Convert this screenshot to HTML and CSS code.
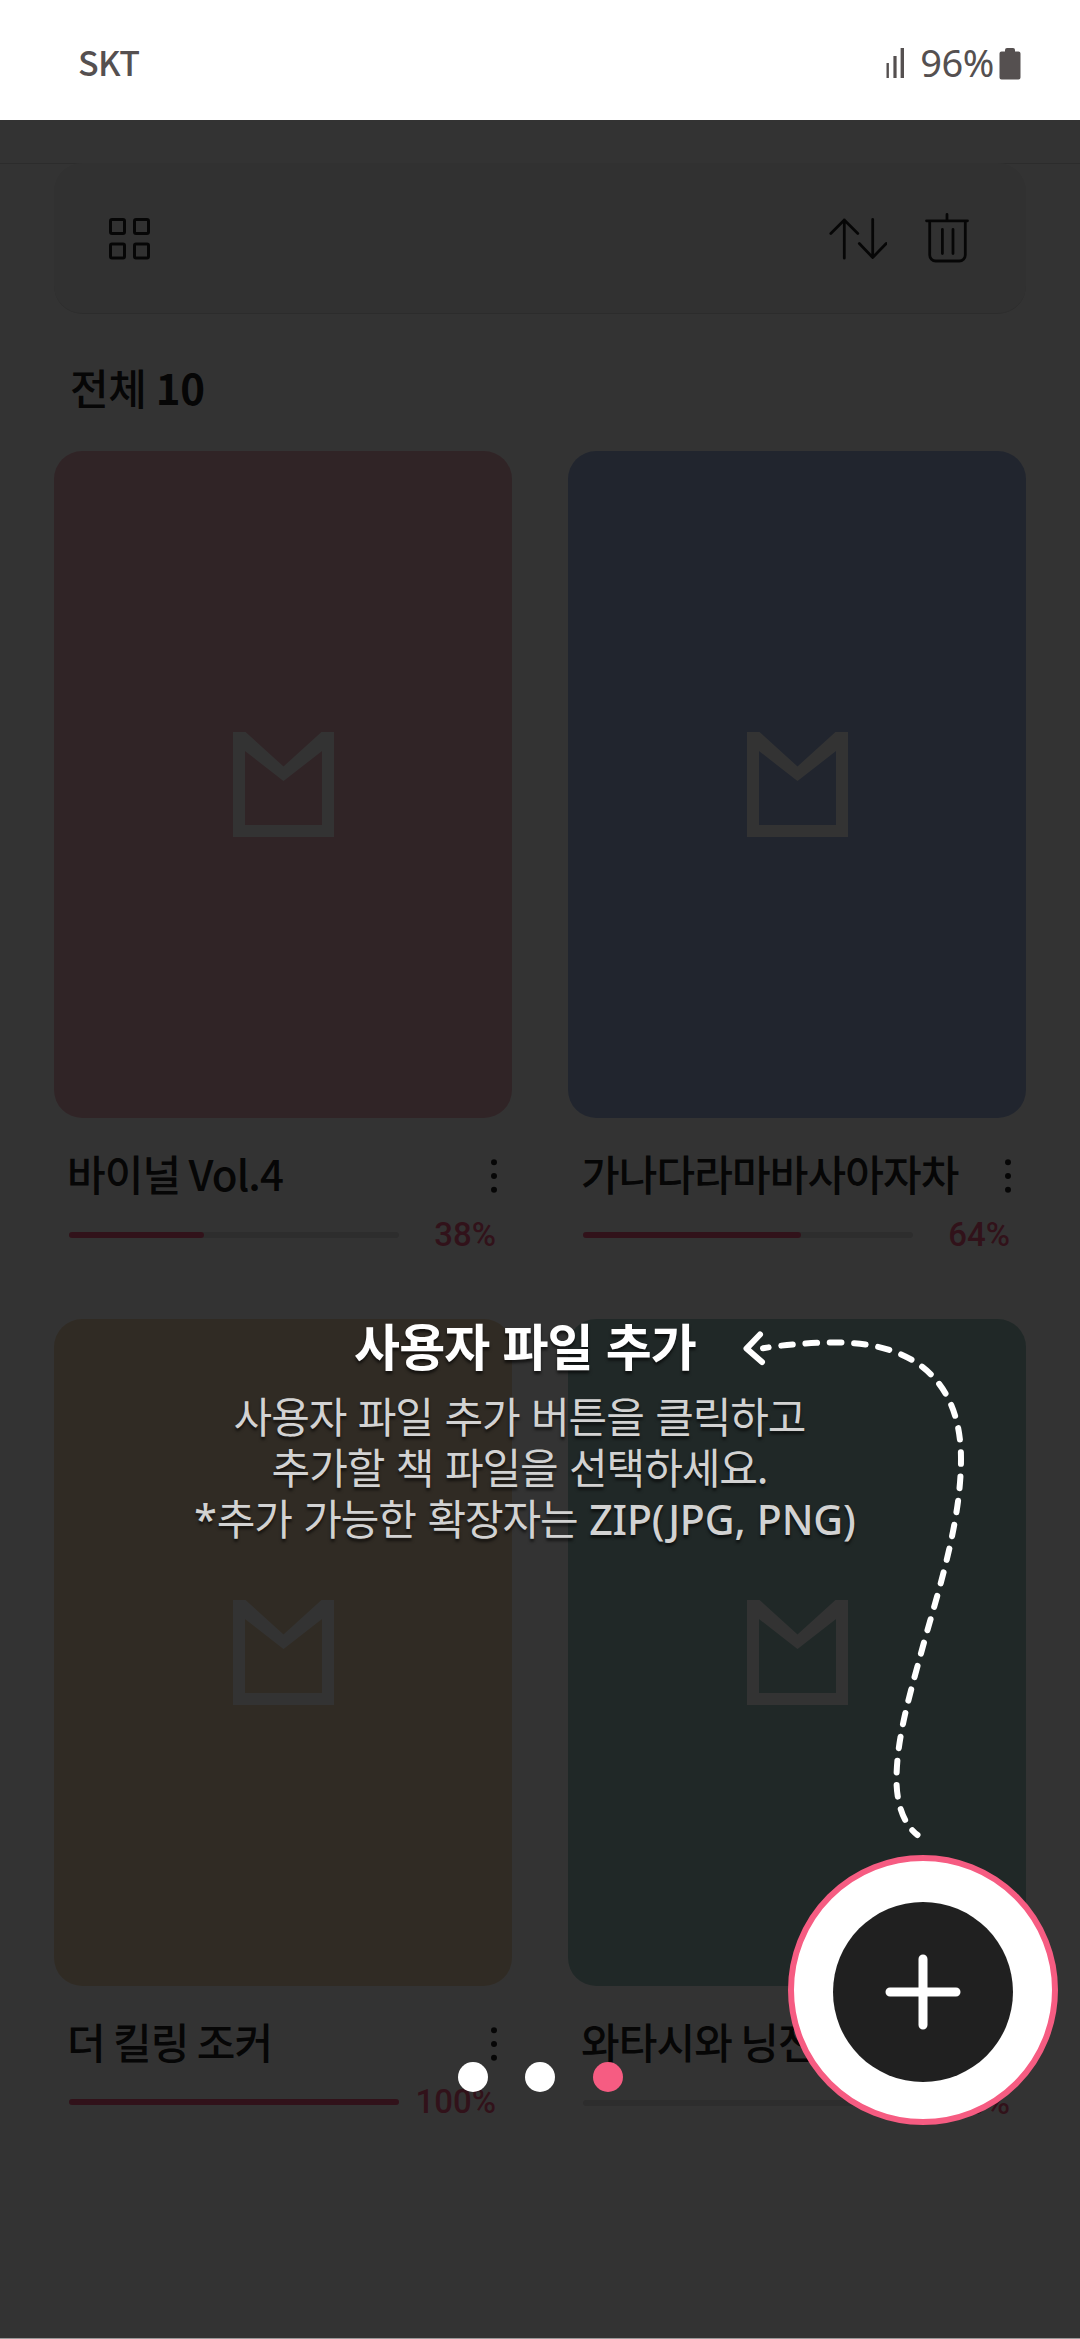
FILE: index.html
```html
<!DOCTYPE html>
<html lang="ko">
<head>
<meta charset="utf-8">
<title>보관함</title>
<link rel="stylesheet" href="styles.css">
</head>
<body>
<svg class="defs" aria-hidden="true">
  <symbol id="mark" viewBox="0 0 101 105"><path fill-rule="evenodd" d="M0 0H12.5L50.5 34.5L88.5 0H101V105H0ZM12 19V93H89V19L50.5 49Z"/></symbol>
  <symbol id="more" viewBox="0 0 6 34"><circle cx="3" cy="3.2" r="3"/><circle cx="3" cy="17" r="3"/><circle cx="3" cy="30.8" r="3"/></symbol>
</svg>

<header class="status">
  <span class="carrier">SKT</span>
  <div class="status-right">
    <svg class="signal" width="18" height="30" viewBox="0 0 18 30"><path d="M1.7 15v15" stroke-width="2.4"/><path d="M9 8v22" stroke-width="3.2"/><path d="M16.3 0v30" stroke-width="3.4"/></svg>
    <span class="battery-level">96%</span>
    <svg class="battery" width="22" height="33" viewBox="0 0 22 33"><path d="M6 3a2 2 0 0 1 2-2h6a2 2 0 0 1 2 2v1.500h3.500a2 2 0 0 1 2 2V30.500a2 2 0 0 1-2 2H2.500a2 2 0 0 1-2-2V6.500a2 2 0 0 1 2-2H6z"/></svg>
  </div>
</header>

<main class="library">
  <div class="divider"></div>
  <div class="toolbar">
    <svg class="icon" width="42" height="42" viewBox="0 0 42 42"><g stroke-width="3"><rect x="1.500" y="1.500" width="14" height="14" rx="1.500"/><rect x="25.500" y="1.500" width="14" height="14" rx="1.500"/><rect x="1.500" y="26" width="14" height="14" rx="1.500"/><rect x="25.500" y="26" width="14" height="14" rx="1.500"/></g></svg>
    <div class="tools">
      <svg class="icon" width="58" height="42" viewBox="0 0 58 42"><path d="M1.800 15.500 15.300 2l13.500 13.500M15.300 2v38.200M43.700 1.500v38M30.300 25.500l13.400 14 13.500-14"/></svg>
      <svg class="icon trash" width="44" height="50" viewBox="0 0 44 50"><path d="M1.500 7.800h41M22 1.500v6M4.700 8v34a6 6 0 0 0 6 6h23.600a6 6 0 0 0 6-6V8M17.400 16.500v24M28 16.500v24"/></svg>
    </div>
  </div>

  <h1 class="count">전체 <b>10</b></h1>

  <section class="books">
    <article class="book">
      <div class="cover rose"><svg class="mark"><use href="#mark"/></svg></div>
      <div class="title-row"><h2>바이널 Vol.4</h2><svg class="more"><use href="#more"/></svg></div>
      <div class="progress"><div class="track"><div class="fill" style="width:41%"></div></div><span>38%</span></div>
    </article>
    <article class="book">
      <div class="cover blue"><svg class="mark"><use href="#mark"/></svg></div>
      <div class="title-row"><h2>가나다라마바사아자차</h2><svg class="more"><use href="#more"/></svg></div>
      <div class="progress"><div class="track"><div class="fill" style="width:66%"></div></div><span>64%</span></div>
    </article>
    <article class="book">
      <div class="cover sand"><svg class="mark"><use href="#mark"/></svg></div>
      <div class="title-row"><h2>더 킬링 조커</h2><svg class="more"><use href="#more"/></svg></div>
      <div class="progress complete"><div class="track"><div class="fill" style="width:100%"></div></div><span>100%</span></div>
    </article>
    <article class="book">
      <div class="cover teal"><svg class="mark"><use href="#mark"/></svg></div>
      <div class="title-row"><h2>와타시와 닝전</h2><svg class="more"><use href="#more"/></svg></div>
      <div class="progress"><div class="track"></div><span>0%</span></div>
    </article>
  </section>

  <div class="coach">
    <div class="coach-text">
      <h3>사용자 파일 추가</h3>
      <p class="line">사용자 파일 추가 버튼을 클릭하고</p>
      <p class="line">추가할 책 파일을 선택하세요.</p>
      <p><span class="latin">*</span>추가 가능한 확장자는 <span class="latin">ZIP(JPG, PNG)</span></p>
    </div>
    <svg class="arrow" viewBox="740 1326 230 516">
      <path class="dash" d="M917.500 1835C903 1824 896.500 1802 896.500 1780C896.500 1738 910 1694 922.300 1648.600C936 1598 961 1525 961 1459C961 1383 916 1342.500 836.700 1342.500C810 1342.500 785 1344.500 763 1348.300"/>
      <path d="M760 1334.500 746.500 1348.600 762 1362"/>
    </svg>
    <button class="add" aria-label="파일 추가"><span class="add-core"><svg width="76" height="76" viewBox="0 0 76 76"><path d="M38 5v66M5 38h66"/></svg></span></button>
    <div class="pager"><i></i><i></i><i class="on"></i></div>
  </div>
</main>
</body>
</html>
```
FILE: styles.css
```css
* { box-sizing: border-box; margin: 0; padding: 0; }

html { background: #999; }

body {
  width: 1080px;
  height: 2338px;
  overflow: hidden;
  background: #fff;
  color: #222;
  font-family: "Noto Sans CJK KR", sans-serif;
}

.defs { position: absolute; width: 0; height: 0; }

.status {
  display: flex;
  justify-content: space-between;
  align-items: center;
  height: 120px;
  padding: 6px 59px 0 78px;
  color: #555050;
}
.carrier { margin-top: -3px; font-size: 34px; font-weight: 500; line-height: 40px; letter-spacing: -0.6px; }
.status-right { display: flex; align-items: center; }
.signal { stroke: #555050; margin-right: 16px; }
.battery-level { margin: -2px 5px 0 0; font: 400 38px/40px "Noto Sans", sans-serif; letter-spacing: -0.4px; }
.battery { fill: #555050; }

.library { position: relative; height: 2218px; padding-top: 43px; }
.divider { height: 1px; background: #dcdcdc; }

.toolbar {
  display: flex;
  justify-content: space-between;
  align-items: center;
  width: 972px;
  height: 151px;
  margin: -1px auto 0;
  padding: 2px 57px 0 55px;
  border-bottom: 1px solid #dcdcdc;
  border-radius: 28px;
  background: #f2f2f2;
}
.icon { fill: none; stroke: #222; stroke-width: 2.8; stroke-linecap: round; stroke-linejoin: round; }
.trash { margin-top: -3px; }
.tools { display: flex; align-items: center; gap: 38px; }

.count { height: 137px; padding: 43px 0 0 70px; font-size: 42px; line-height: 60px; font-weight: 500; letter-spacing: -0.4px; word-spacing: -2px; }
.count b { font-weight: 700; }

.books { display: grid; grid-template-columns: 458px 458px; gap: 0 56px; padding: 0 54px; }
.book { height: 868px; }
.cover { display: flex; align-items: center; justify-content: center; height: 667px; border-radius: 28px; }
.rose { background: #f0b4be; }
.blue { background: #a5b9e6; }
.sand { background: #f0d7b4; }
.teal { background: #a0c8c3; }
.mark { width: 101px; height: 105px; fill: #fff; }

.title-row { display: flex; justify-content: space-between; align-items: center; height: 60px; margin-top: 28px; padding: 0 15px 0 13px; }
.title-row h2 { margin-top: -7px; font-size: 42px; line-height: 60px; font-weight: 500; letter-spacing: -0.9px; word-spacing: -2.6px; white-space: nowrap; }
.more { width: 6px; height: 34px; fill: #222; }

.progress { display: flex; align-items: center; justify-content: space-between; height: 40px; margin-top: 9px; padding: 0 16px 0 15px; }
.complete { margin-top: 8px; }
.track { width: 330px; height: 6px; border-radius: 3px; background: #dedede; }
.fill { height: 6px; border-radius: 3px; background: #f65c82; }
.progress span { color: #f65c82; font: 500 33px/40px Roboto, sans-serif; }

.coach { position: absolute; inset: 0; background: rgba(0, 0, 0, 0.8); }
.coach-text { width: 1050px; padding-top: 1189px; text-align: center; color: #fff; text-shadow: 0 3px 3px rgba(0, 0, 0, 0.6); }
.coach-text h3 { margin-bottom: 10px; font-size: 50px; line-height: 70px; font-weight: 700; letter-spacing: -0.9px; }
.coach-text p { height: 51px; font-size: 42px; line-height: 51px; font-weight: 400; letter-spacing: -1.1px; word-spacing: 0.9px; color: #d2d2d2; white-space: nowrap; }
.coach-text .line { padding-right: 11px; }
.coach-text .latin { font-family: "Noto Sans", sans-serif; font-weight: 500; font-size: 41px; line-height: 40px; letter-spacing: -0.15px; }

.arrow { position: absolute; left: 740px; top: 1206px; width: 230px; height: 516px; fill: none; stroke: #fff; stroke-width: 6; stroke-linecap: round; stroke-linejoin: round; }
.dash { stroke-dasharray: 11.6 12.700; stroke-dashoffset: 4.5; }

.add {
  position: absolute;
  left: 787.5px;
  top: 1735px;
  display: flex;
  align-items: center;
  justify-content: center;
  width: 270px;
  height: 270px;
  border: 6px solid #f65c82;
  border-radius: 50%;
  background: #fff;
}
.add-core { display: flex; align-items: center; justify-content: center; width: 180px; height: 180px; margin-top: 3px; border-radius: 50%; background: #202020; }
.add-core path { stroke: #fff; stroke-width: 9; stroke-linecap: round; }

.pager { position: absolute; left: 0; right: 0; top: 1942px; display: flex; justify-content: center; gap: 37.5px; }
.pager i { width: 30px; height: 30px; border-radius: 50%; background: #fff; }
.pager .on { background: #f65c82; }
```
